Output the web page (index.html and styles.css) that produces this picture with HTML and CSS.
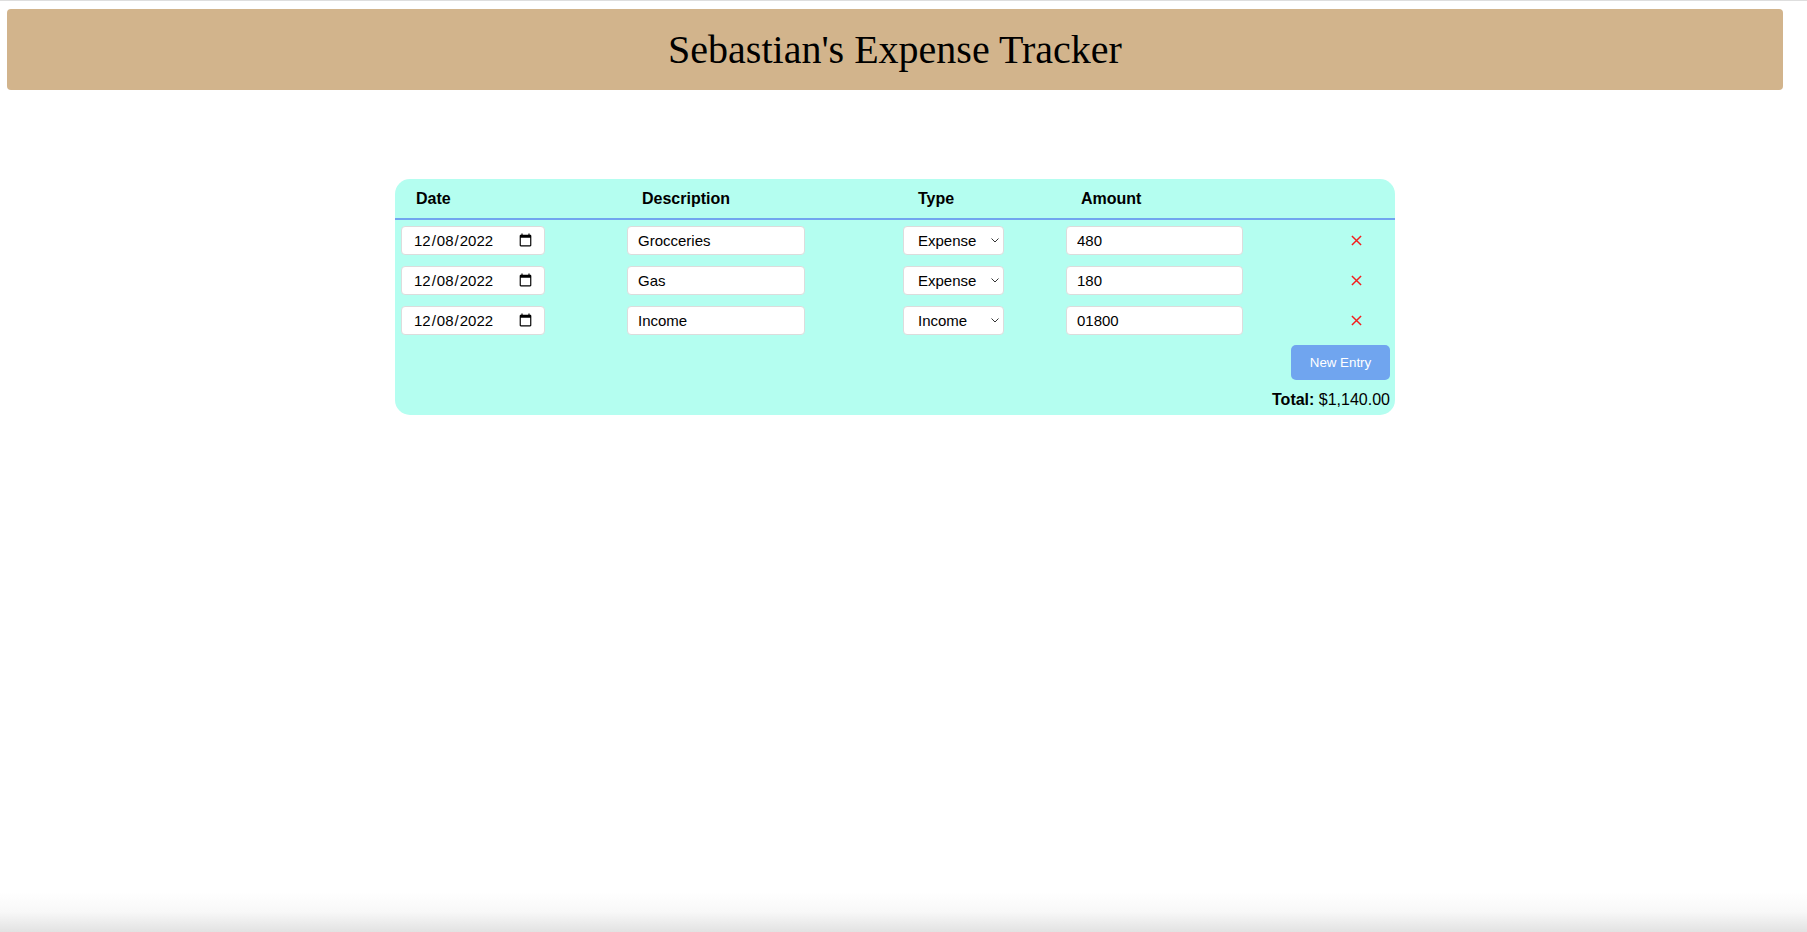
FILE: index.html
```html
<!DOCTYPE html>
<html lang="en">
<head>
<meta charset="utf-8">
<title>Sebastian's Expense Tracker</title>
<link rel="stylesheet" href="styles.css">
</head>
<body>
<header class="banner">
  <h1 class="title">Sebastian's Expense Tracker</h1>
</header>
<main class="page">
  <section class="card">
    <div class="grid head">
      <div class="th">Date</div>
      <div class="th">Description</div>
      <div class="th">Type</div>
      <div class="th">Amount</div>
      <div class="th"></div>
    </div>
    <div class="rows">
      <div class="grid row">
        <div class="cell"><input class="field date" type="date" value="2022-12-08"></div>
        <div class="cell"><input class="field desc" type="text" value="Grocceries"></div>
        <div class="cell"><span class="select-wrap"><select class="field type"><option selected>Expense</option><option>Income</option></select><svg class="chev" viewBox="0 0 8 5" width="8" height="5"><path d="M0.5 0.5 L4 4 L7.5 0.5"/></svg></span></div>
        <div class="cell"><input class="field amount" type="text" value="480"></div>
        <div class="cell del"><svg class="x" viewBox="0 0 12 12" width="12" height="12"><path d="M1 1 L11 11 M11 1 L1 11"/></svg></div>
      </div>
      <div class="grid row">
        <div class="cell"><input class="field date" type="date" value="2022-12-08"></div>
        <div class="cell"><input class="field desc" type="text" value="Gas"></div>
        <div class="cell"><span class="select-wrap"><select class="field type"><option selected>Expense</option><option>Income</option></select><svg class="chev" viewBox="0 0 8 5" width="8" height="5"><path d="M0.5 0.5 L4 4 L7.5 0.5"/></svg></span></div>
        <div class="cell"><input class="field amount" type="text" value="180"></div>
        <div class="cell del"><svg class="x" viewBox="0 0 12 12" width="12" height="12"><path d="M1 1 L11 11 M11 1 L1 11"/></svg></div>
      </div>
      <div class="grid row">
        <div class="cell"><input class="field date" type="date" value="2022-12-08"></div>
        <div class="cell"><input class="field desc" type="text" value="Income"></div>
        <div class="cell"><span class="select-wrap"><select class="field type"><option>Expense</option><option selected>Income</option></select><svg class="chev" viewBox="0 0 8 5" width="8" height="5"><path d="M0.5 0.5 L4 4 L7.5 0.5"/></svg></span></div>
        <div class="cell"><input class="field amount" type="text" value="01800"></div>
        <div class="cell del"><svg class="x" viewBox="0 0 12 12" width="12" height="12"><path d="M1 1 L11 11 M11 1 L1 11"/></svg></div>
      </div>
    </div>
    <div class="actions"><button class="btn" type="button">New Entry</button></div>
    <div class="total"><strong>Total:</strong> $1,140.00</div>
  </section>
</main>
</body>
</html>
```
FILE: styles.css
```css
html {
  border-top: 1px solid #dedede;
  min-height: calc(100vh - 1px);
  background: linear-gradient(to bottom, #ffffff calc(100% - 40px), #f8f8f8 calc(100% - 20px), #e2e2e2 100%);
}

body {
  margin: 8px 24px 0 7px;
  font-family: "Liberation Sans", Arial, sans-serif;
  color: #000;
}

.banner {
  height: 81px;
  background: #d2b48c;
  border-radius: 4px;
  display: flex;
  align-items: center;
  justify-content: center;
}

.title {
  margin: 0;
  font-family: "Liberation Serif", "Times New Roman", serif;
  font-weight: normal;
  font-size: 40px;
  line-height: normal;
}

.page {
  display: flex;
  justify-content: center;
  padding-top: 89px;
}

.card {
  width: 1000px;
  box-sizing: border-box;
  background: #b4fef0;
  border-radius: 15px;
  padding: 0 5px 6px 0;
}

.grid {
  display: grid;
  grid-template-columns: 226px 276px 163px 260px 60px;
  padding-left: 6px;
  align-items: center;
}

.head {
  height: 39px;
  border-bottom: 2px solid #70a5ef;
  margin-right: -5px;
}

.th {
  padding-left: 15px;
  font-weight: bold;
  font-size: 16px;
}

.rows {
  display: flex;
  flex-direction: column;
  gap: 11px;
  padding-top: 6px;
}

.row {
  height: 29px;
}

.cell {
  display: flex;
  align-items: center;
}

.field {
  box-sizing: border-box;
  height: 29px;
  border: 1px solid #dcdcdc;
  border-radius: 4px;
  background: #fff;
  font-family: "Liberation Sans", Arial, sans-serif;
  font-size: 15px;
  color: #000;
  padding: 0 10px;
  margin: 0;
  outline: none;
}

.date {
  width: 144px;
  padding: 0 9px 0 11px;
}

.desc {
  width: 178px;
}

.select-wrap {
  position: relative;
  display: inline-flex;
}

.type {
  width: 101px;
  padding: 0 20px 0 14px;
  appearance: none;
  -webkit-appearance: none;
}

.chev {
  position: absolute;
  right: 5px;
  top: 12px;
  width: 8px;
  height: 5px;
  fill: none;
  stroke: #333;
  stroke-width: 1;
}

.amount {
  width: 177px;
}

.del {
  justify-content: center;
}

.x {
  width: 11px;
  height: 11px;
  fill: none;
  stroke: #f41d1d;
  stroke-width: 1.6;
}

.actions {
  display: flex;
  justify-content: flex-end;
  padding-top: 10px;
}

.btn {
  width: 99px;
  height: 35px;
  border: none;
  border-radius: 5px;
  background: #70a5ef;
  color: #fff;
  font-family: "Liberation Sans", Arial, sans-serif;
  font-size: 13.33px;
  padding: 0;
}

.total {
  text-align: right;
  font-size: 16px;
  padding-top: 11px;
}
```
